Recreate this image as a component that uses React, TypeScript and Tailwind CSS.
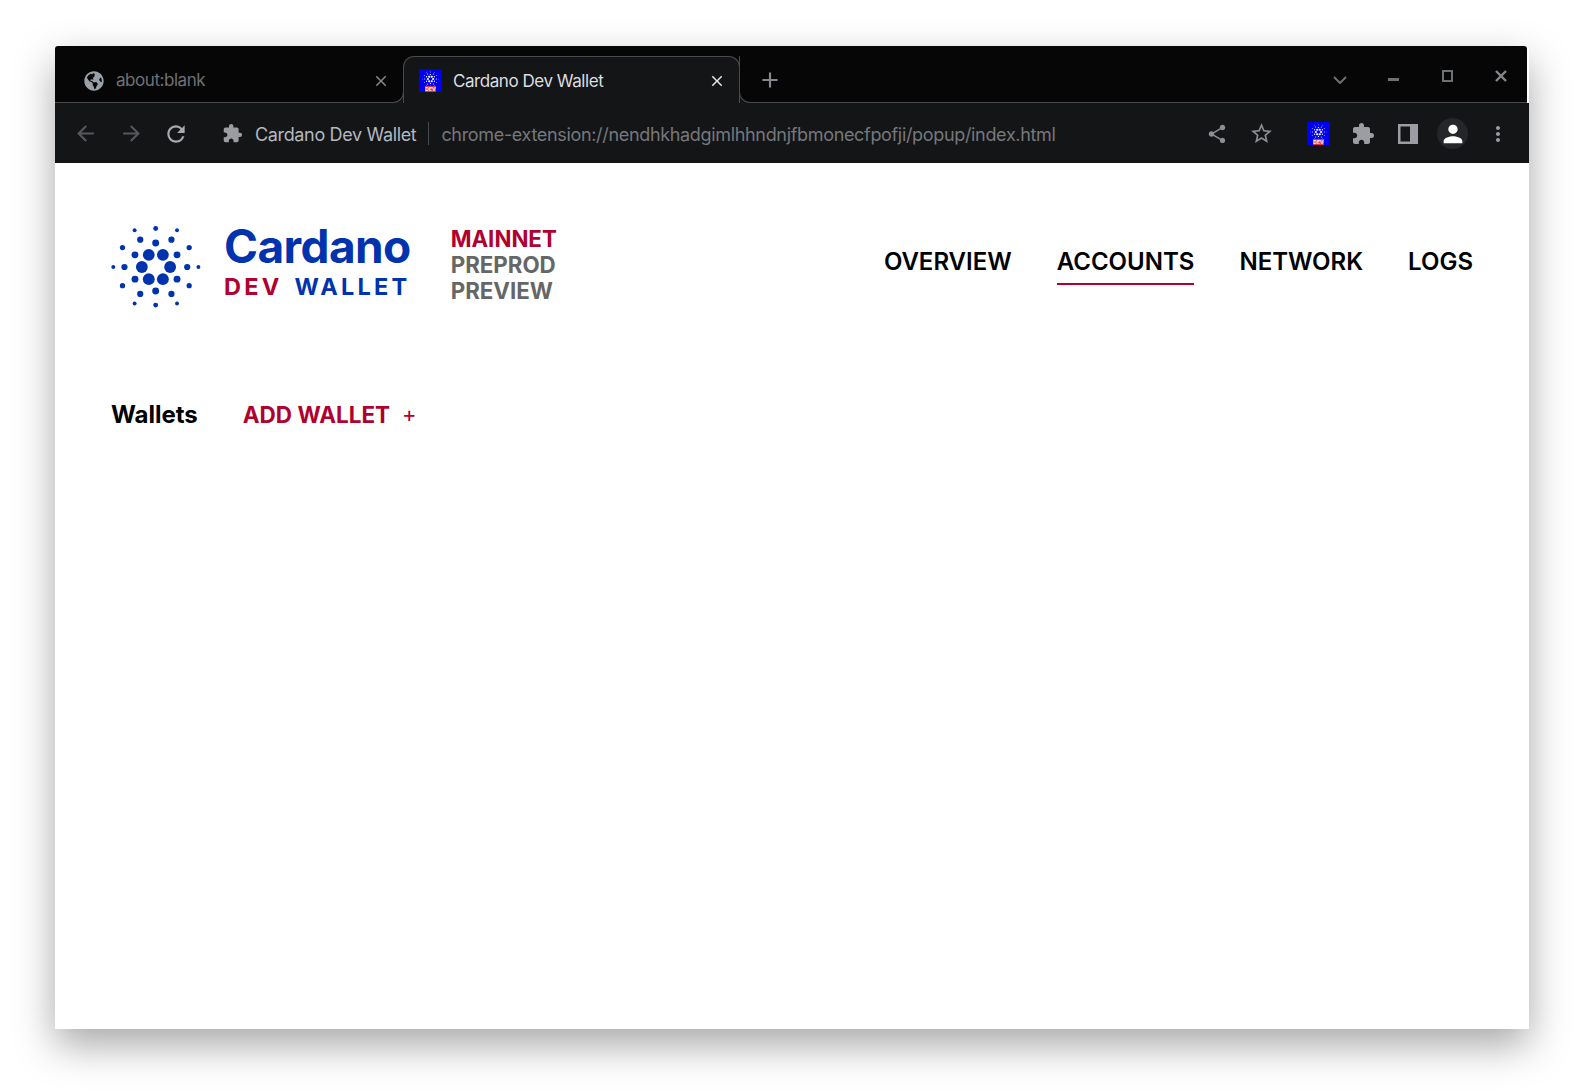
import React from 'react';
import {
  MdAdd,
  MdArrowBack,
  MdArrowForward,
  MdClose,
  MdExtension,
  MdMoreVert,
  MdPerson,
  MdRefresh,
  MdShare,
  MdStarBorder,
} from 'react-icons/md';
import { FaGlobeAmericas } from 'react-icons/fa';

// dot positions traced off the logo: [x, y, r]
const dots: number[][] = [
  [146, 118, 18], [189, 118, 18], [125, 155, 18], [211, 155, 18], [146, 192, 18], [189, 192, 18],
  [104, 118, 10.5], [232, 118, 10.5], [104, 192, 10.5], [232, 192, 10.5], [72, 155, 9.5], [263, 155, 9.5],
  [167, 82, 10.5], [167, 228, 10.5], [120, 72, 9.5], [215, 72, 9.5], [120, 237, 9.5], [215, 237, 9.5],
  [66, 96, 8], [269, 96, 8], [66, 212, 8], [269, 212, 8],
  [38, 155, 6], [297, 155, 6], [103, 43, 6], [232, 43, 6], [103, 266, 6], [232, 266, 6],
  [167, 38, 7.5], [167, 271, 7.5],
];

const CardanoMark: React.FC<{ className: string; fill: string }> = ({ className, fill }) => (
  <svg className={className} viewBox="28 28 280 254" aria-hidden="true">
    {dots.map(([cx, cy, r], i) => (
      <circle key={i} cx={cx} cy={cy} r={r} fill={fill} />
    ))}
  </svg>
);

const Favicon: React.FC = () => (
  <div className="relative flex h-[23px] w-[23px] shrink-0 justify-center bg-[#0000f0] pt-[2px]">
    <CardanoMark className="h-[16px] w-[17px]" fill="#ffffff" />
    <span className="absolute bottom-0 left-[6px] h-[6px] w-[11px] bg-[#d9344a] text-center font-['Inter'] text-[5px] leading-[6px] font-bold text-white">
      DEV
    </span>
  </div>
);

const Tab: React.FC<{ active?: boolean; title: string }> = ({ active, title }) =>
  active ? (
    <div className="bg-[#060606]">
      <div className="flex h-[47px] w-[337px] items-center rounded-t-[11px] border-x border-t border-[#4a4a4c] bg-[#141517] pt-[1px] pr-[13px] pl-[15px]">
        <Favicon />
        <span className="ml-[11px] flex-1 pt-[3px] text-[17px] tracking-[-0.45px] text-[#dcdde0]">{title}</span>
        <MdClose className="text-[#e4e5e7]" size={18} />
      </div>
    </div>
  ) : (
    <div className="-mr-px flex h-[47px] w-[349px] items-center rounded-br-[11px] border-r border-b border-[#4a4a4c] bg-[#060606] pt-[3px] pr-[13px] pl-[29px]">
      <FaGlobeAmericas className="text-[#9ba0a6]" size={20} />
      <span className="ml-[12px] flex-1 pt-[1px] text-[17px] tracking-[-0.45px] text-[#6f7175]">{title}</span>
      <MdClose className="text-[#85888c]" size={18} />
    </div>
  );

const WindowControls: React.FC = () => (
  <div className="flex flex-1 items-start justify-end self-stretch pr-[20px]">
    <svg className="mt-[20px]" width="14" height="8" viewBox="0 0 14 8" aria-hidden="true">
      <path d="M1 1l6 6 6-6" fill="none" stroke="#6d7074" strokeWidth="2" />
    </svg>
    <div className="mt-[22px] ml-[41px] h-[3px] w-[11px] bg-[#6d7074]" />
    <div className="mt-[14px] ml-[43px] h-[12px] w-[11px] border-[2.5px] border-[#6d7074]" />
    <svg className="mt-[14px] ml-[42px]" width="12" height="12" viewBox="0 0 12 12" aria-hidden="true">
      <path d="M1 1l10 10M11 1L1 11" fill="none" stroke="#85888c" strokeWidth="2.4" />
    </svg>
  </div>
);

const TabStrip: React.FC = () => (
  <div className="mr-[2px] rounded-t-[3px] bg-[#060606]">
    <div className="h-[10px]" />
    <div className="flex h-[47px] bg-[#141517]">
      <Tab title="about:blank" />
      <Tab active title="Cardano Dev Wallet" />
      <div className="-ml-px flex flex-1 items-center rounded-bl-[11px] border-b border-l border-[#4a4a4c] bg-[#060606] pl-[17px]">
        <MdAdd className="mt-[2px] text-[#85888c]" size={26} />
        <WindowControls />
      </div>
    </div>
  </div>
);

const AddressBar: React.FC = () => (
  <div className="flex h-[60px] items-center bg-[#141517] pt-[1px] pl-[18px]">
    <MdArrowBack className="text-[#55585c]" size={25} />
    <MdArrowForward className="ml-[21px] text-[#55585c]" size={25} />
    <MdRefresh className="ml-[19px] text-[#a6a9ad]" size={26} />
    <MdExtension className="ml-[33px] text-[#9a9da1]" size={21} />
    <span className="ml-[12px] pt-[2px] text-[18px] tracking-[-0.35px] text-[#b3b8c0]">Cardano Dev Wallet</span>
    <div className="mr-[12px] ml-[12px] h-[23px] w-px bg-[#4a4a4c]" />
    <span className="flex-1 pt-[2px] text-[18px] tracking-[-0.33px] text-[#75787c]">
      chrome-extension://nendhkhadgimlhhndnjfbmonecfpofji/popup/index.html
    </span>
    <div className="flex items-center pr-[19px]">
      <MdShare className="text-[#8b8e92]" size={22} />
      <MdStarBorder className="ml-[21px] text-[#8b8e92]" size={25} />
      <div className="ml-[33px]">
        <Favicon />
      </div>
      <MdExtension className="ml-[21px] text-[#9a9da1]" size={24} />
      <svg className="ml-[22px]" width="22" height="22" viewBox="0 0 22 22" aria-hidden="true">
        <path fillRule="evenodd" fill="#9a9da1" d="M1 1h20v20H1zM3.5 3.5v15H13v-15z" />
      </svg>
      <div className="ml-[18px] flex h-[31px] w-[31px] items-center justify-center rounded-full bg-[#25262a]">
        <MdPerson className="text-white" size={28} />
      </div>
      <MdMoreVert className="ml-[18px] text-[#9a9da1]" size={24} />
    </div>
  </div>
);

const navItems = ['OVERVIEW', 'ACCOUNTS', 'NETWORK', 'LOGS'];

const Header: React.FC = () => (
  <header className="flex items-start justify-between pt-[60px] pr-[56px] pl-[55px]">
    <div className="flex items-start">
      <CardanoMark className="h-[88px] w-[92px]" fill="#0033ad" />
      <div className="ml-[22px]">
        <div className="mt-[-5px] text-[46px] leading-[56px] font-bold tracking-[-0.6px] text-[#0033ad]">Cardano</div>
        <div className="mt-[-1px] text-[23.5px] leading-[28px] font-bold tracking-[3.2px] text-[#0033ad]">
          <span className="text-[#b00030]">DEV</span>
          <span className="ml-[12px]">WALLET</span>
        </div>
      </div>
      <div className="mt-[2.5px] ml-[40px] text-[22.3px] leading-[26px] font-bold text-[#666666]">
        <div className="text-[#b00030]">MAINNET</div>
        <div>PREPROD</div>
        <div>PREVIEW</div>
      </div>
    </div>
    <nav className="mt-[22px] flex gap-[45px]">
      {navItems.map((item) => (
        <div
          key={item}
          className={`border-b-2 pb-[4px] text-[24px] leading-[34px] font-semibold text-black ${
            item === 'ACCOUNTS' ? 'border-[#b00030]' : 'border-transparent'
          }`}
        >
          {item}
        </div>
      ))}
    </nav>
  </header>
);

export default function App() {
  return (
    <div className="h-[1091px] overflow-hidden bg-white pt-[46px] pl-[55px] font-['Inter',sans-serif]">
      <div className="flex h-[983px] w-[1474px] flex-col rounded-t-[3px] shadow-[0_16px_40px_rgba(0,0,0,0.35)]">
        <TabStrip />
        <AddressBar />
        <main className="flex-1 bg-white">
          <Header />
          <div className="mt-[86px] flex items-center pl-[56px]">
            <span className="text-[24px] leading-[34px] font-bold text-black">Wallets</span>
            <span className="ml-[45px] text-[22.5px] leading-[34px] font-bold text-[#b00030]">ADD WALLET</span>
            <span className="ml-[12px] pb-[2px] text-[22px] leading-[34px] text-[#b00030]">+</span>
          </div>
        </main>
      </div>
    </div>
  );
}
